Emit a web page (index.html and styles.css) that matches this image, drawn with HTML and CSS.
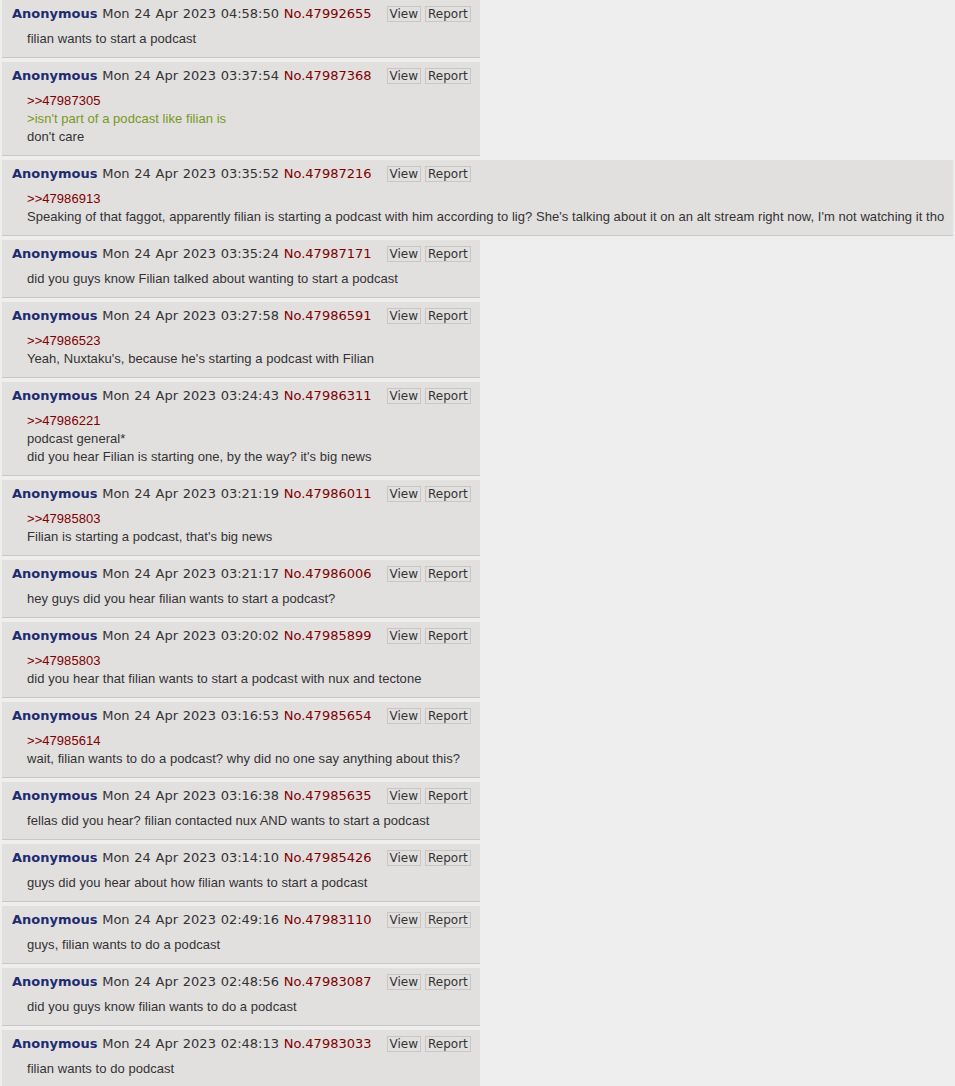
FILE: index.html
```html
<!DOCTYPE html>
<html>
<head>
<meta charset="utf-8">
<link rel="stylesheet" href="styles.css">
</head>
<body>
<div class="thread">
  <article class="post">
    <header class="post-head"><span class="info"><span class="name">Anonymous</span> <span class="date">Mon 24 Apr 2023 04:58:50</span> <span class="num">No.47992655</span></span><span class="btns"><span class="btn">View</span><span class="btn">Report</span></span></header>
    <div class="text">filian wants to start a podcast</div>
  </article>
  <article class="post">
    <header class="post-head"><span class="info"><span class="name">Anonymous</span> <span class="date">Mon 24 Apr 2023 03:37:54</span> <span class="num">No.47987368</span></span><span class="btns"><span class="btn">View</span><span class="btn">Report</span></span></header>
    <div class="text"><span class="ql">&gt;&gt;47987305</span><br><span class="gt">&gt;isn't part of a podcast like filian is</span><br>don't care</div>
  </article>
  <article class="post">
    <header class="post-head"><span class="info"><span class="name">Anonymous</span> <span class="date">Mon 24 Apr 2023 03:35:52</span> <span class="num">No.47987216</span></span><span class="btns"><span class="btn">View</span><span class="btn">Report</span></span></header>
    <div class="text"><span class="ql">&gt;&gt;47986913</span><br>Speaking of that faggot, apparently filian is starting a podcast with him according to lig? She's talking about it on an alt stream right now, I'm not watching it tho</div>
  </article>
  <article class="post">
    <header class="post-head"><span class="info"><span class="name">Anonymous</span> <span class="date">Mon 24 Apr 2023 03:35:24</span> <span class="num">No.47987171</span></span><span class="btns"><span class="btn">View</span><span class="btn">Report</span></span></header>
    <div class="text">did you guys know Filian talked about wanting to start a podcast</div>
  </article>
  <article class="post">
    <header class="post-head"><span class="info"><span class="name">Anonymous</span> <span class="date">Mon 24 Apr 2023 03:27:58</span> <span class="num">No.47986591</span></span><span class="btns"><span class="btn">View</span><span class="btn">Report</span></span></header>
    <div class="text"><span class="ql">&gt;&gt;47986523</span><br>Yeah, Nuxtaku's, because he's starting a podcast with Filian</div>
  </article>
  <article class="post">
    <header class="post-head"><span class="info"><span class="name">Anonymous</span> <span class="date">Mon 24 Apr 2023 03:24:43</span> <span class="num">No.47986311</span></span><span class="btns"><span class="btn">View</span><span class="btn">Report</span></span></header>
    <div class="text"><span class="ql">&gt;&gt;47986221</span><br>podcast general*<br>did you hear Filian is starting one, by the way? it's big news</div>
  </article>
  <article class="post">
    <header class="post-head"><span class="info"><span class="name">Anonymous</span> <span class="date">Mon 24 Apr 2023 03:21:19</span> <span class="num">No.47986011</span></span><span class="btns"><span class="btn">View</span><span class="btn">Report</span></span></header>
    <div class="text"><span class="ql">&gt;&gt;47985803</span><br>Filian is starting a podcast, that's big news</div>
  </article>
  <article class="post">
    <header class="post-head"><span class="info"><span class="name">Anonymous</span> <span class="date">Mon 24 Apr 2023 03:21:17</span> <span class="num">No.47986006</span></span><span class="btns"><span class="btn">View</span><span class="btn">Report</span></span></header>
    <div class="text">hey guys did you hear filian wants to start a podcast?</div>
  </article>
  <article class="post">
    <header class="post-head"><span class="info"><span class="name">Anonymous</span> <span class="date">Mon 24 Apr 2023 03:20:02</span> <span class="num">No.47985899</span></span><span class="btns"><span class="btn">View</span><span class="btn">Report</span></span></header>
    <div class="text"><span class="ql">&gt;&gt;47985803</span><br>did you hear that filian wants to start a podcast with nux and tectone</div>
  </article>
  <article class="post">
    <header class="post-head"><span class="info"><span class="name">Anonymous</span> <span class="date">Mon 24 Apr 2023 03:16:53</span> <span class="num">No.47985654</span></span><span class="btns"><span class="btn">View</span><span class="btn">Report</span></span></header>
    <div class="text"><span class="ql">&gt;&gt;47985614</span><br>wait, filian wants to do a podcast? why did no one say anything about this?</div>
  </article>
  <article class="post">
    <header class="post-head"><span class="info"><span class="name">Anonymous</span> <span class="date">Mon 24 Apr 2023 03:16:38</span> <span class="num">No.47985635</span></span><span class="btns"><span class="btn">View</span><span class="btn">Report</span></span></header>
    <div class="text">fellas did you hear? filian contacted nux AND wants to start a podcast</div>
  </article>
  <article class="post">
    <header class="post-head"><span class="info"><span class="name">Anonymous</span> <span class="date">Mon 24 Apr 2023 03:14:10</span> <span class="num">No.47985426</span></span><span class="btns"><span class="btn">View</span><span class="btn">Report</span></span></header>
    <div class="text">guys did you hear about how filian wants to start a podcast</div>
  </article>
  <article class="post">
    <header class="post-head"><span class="info"><span class="name">Anonymous</span> <span class="date">Mon 24 Apr 2023 02:49:16</span> <span class="num">No.47983110</span></span><span class="btns"><span class="btn">View</span><span class="btn">Report</span></span></header>
    <div class="text">guys, filian wants to do a podcast</div>
  </article>
  <article class="post">
    <header class="post-head"><span class="info"><span class="name">Anonymous</span> <span class="date">Mon 24 Apr 2023 02:48:56</span> <span class="num">No.47983087</span></span><span class="btns"><span class="btn">View</span><span class="btn">Report</span></span></header>
    <div class="text">did you guys know filian wants to do a podcast</div>
  </article>
  <article class="post">
    <header class="post-head"><span class="info"><span class="name">Anonymous</span> <span class="date">Mon 24 Apr 2023 02:48:13</span> <span class="num">No.47983033</span></span><span class="btns"><span class="btn">View</span><span class="btn">Report</span></span></header>
    <div class="text">filian wants to do podcast</div>
  </article>
</div>
</body>
</html>
```
FILE: styles.css
```css
html, body {
  margin: 0;
  padding: 0;
  background: #eeeeee;
}

.thread {
  display: flex;
  flex-direction: column;
  align-items: flex-start;
  gap: 4px;
  padding-left: 2px;
}

.post {
  background: #e2dfdf;
  border-bottom: 1px solid #c9c7c7;
  padding: 4px 9px 9px 10px;
}

.post-head {
  display: flex;
  align-items: center;
  height: 20px;
  font-family: "DejaVu Sans", Verdana, sans-serif;
  font-size: 13px;
  line-height: 20px;
  color: #333333;
  white-space: nowrap;
}

.info {
  word-spacing: 0.6px;
}

.name {
  font-weight: bold;
  color: #1d2b6f;
}

.date {
  color: #333333;
}

.num {
  color: #800000;
}

.btns {
  display: flex;
  gap: 4px;
  margin-left: 15px;
}

.btn {
  display: block;
  height: 14px;
  line-height: 14px;
  padding: 0 2px;
  border: 1px solid #c8c6c6;
  font-size: 12px;
  color: #333333;
}

.text {
  margin: 6px 0 0 15px;
  font-family: "Liberation Sans", Arial, sans-serif;
  font-size: 13px;
  line-height: 18px;
  letter-spacing: 0.05px;
  color: #333333;
  white-space: nowrap;
}

.ql {
  color: #800000;
}

.gt {
  color: #789922;
}
```
